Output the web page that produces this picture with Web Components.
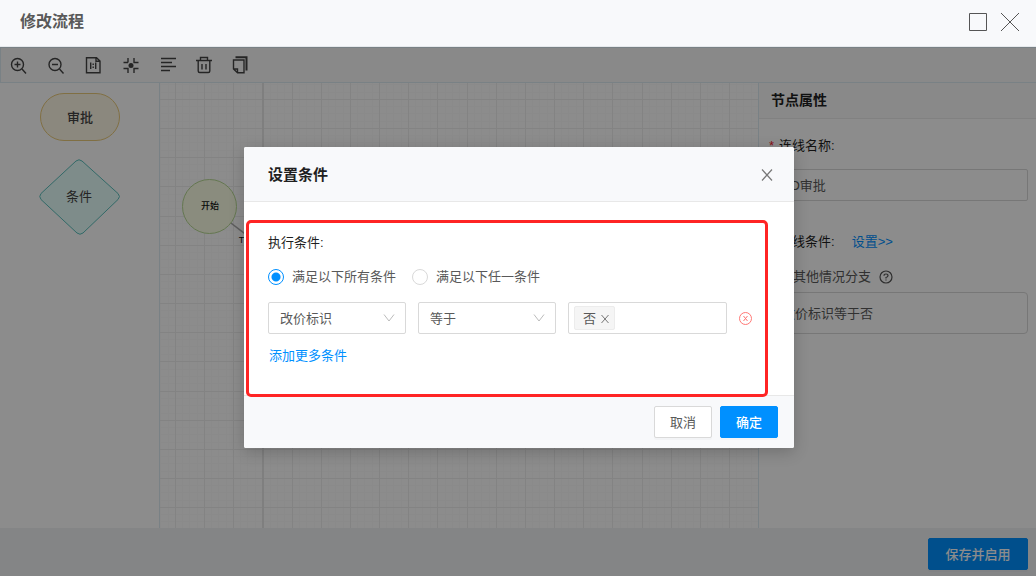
<!DOCTYPE html>
<html lang="zh-CN">
<head>
<meta charset="utf-8">
<title>修改流程</title>
<style>
  html {
    --blue: #0090ff;
    --bar: #f8f9fb;
    --line: #d9d9d9;
    --text: #595959;
    --strong: #1f1f1f;
  }
  body {
    margin: 0;
    font: 13px/20px "Liberation Sans", "Noto Sans CJK SC", sans-serif;
    color: var(--text);
  }
</style>
</head>
<body>
<flow-window>
  <span slot="title">修改流程</span>
  <flow-toolbar></flow-toolbar>
  <flow-editor>
    <node-palette slot="palette"></node-palette>
    <flow-canvas></flow-canvas>
    <node-props slot="props"></node-props>
  </flow-editor>
  <flow-footer><ui-button kind="primary" size="wide">保存并启用</ui-button></flow-footer>
  <modal-dialog slot="modal">
    <span slot="title">设置条件</span>
    <condition-form></condition-form>
    <ui-button slot="actions">取消</ui-button>
    <ui-button slot="actions" kind="primary">确定</ui-button>
  </modal-dialog>
</flow-window>

<script>
  // defines an element whose shadow root is cloned from the markup
  const define = (name, html) => {
    const temp = document.createElement('template');
    temp.innerHTML = html;
    customElements.define(name, class extends HTMLElement {
      constructor() {
        super();
        this.attachShadow({ mode: 'open' }).appendChild(temp.content.cloneNode(true));
      }
    });
  };

  define('flow-window', `
    <style>
      :host { display: flex; flex-direction: column; min-height: 100vh; }
      header {
        display: flex; align-items: center; gap: 14px; box-sizing: border-box; height: 47px;
        padding: 0 17px 2px 20px; background: var(--bar); border-bottom: 1px solid #e6e9ec;
      }
      h1 { flex: 1; margin: 0; font-size: 16px; line-height: 24px; font-weight: 700; color: #595959; }
      button { padding: 0; border: 0; background: none; height: 18px; }
      svg { display: block; fill: none; stroke: #555; }
      .stage { position: relative; flex: 1; display: flex; flex-direction: column; background: #fff; }
      .mask {
        position: absolute; inset: 0; display: flex; align-items: flex-start; justify-content: center;
        padding-top: 100px; background: rgba(0, 0, 0, .45);
      }
    </style>
    <header>
      <h1><slot name="title"></slot></h1>
      <button aria-label="最大化"><svg width="18" height="18"><path d="M.5.5h17v17H.5z"/></svg></button>
      <button aria-label="关闭"><svg width="18" height="18"><path d="M0 0l18 18M18 0L0 18"/></svg></button>
    </header>
    <div class="stage">
      <slot></slot>
      <div class="mask"><slot name="modal"></slot></div>
    </div>`);

  define('flow-toolbar', `
    <style>
      :host {
        display: flex; align-items: center; gap: 19px; box-sizing: border-box; height: 36px; padding: 0 9px;
        background: #fafafa; border: 1px solid #dcebf2; border-right: 0;
      }
      button { padding: 0; border: 0; background: none; height: 18px; }
      svg { display: block; fill: none; stroke: #444; stroke-width: 1.4; }
    </style>
    <button aria-label="放大"><svg width="18" height="18"><circle cx="7.500" cy="8.500" r="6"/><path d="M12 13l4 4.500M4.500 8.500h6M7.500 5.500v6"/></svg></button>
    <button aria-label="缩小"><svg width="18" height="18"><circle cx="8" cy="8.500" r="6"/><path d="M12.500 13l4 4.500M5 8.500h6"/></svg></button>
    <button aria-label="实际大小"><svg width="18" height="18"><path d="M2.500 1.700h10L16 5v11.800H2.500zM12 1.700V5.200H16M6.700 6.500v6.500M11.700 6.500v6.500M9.200 7.500v1.500M9.200 10.500v1.500"/></svg></button>
    <button aria-label="适应画布"><svg width="18" height="18"><circle cx="10" cy="9.500" r="2.500" fill="#444" stroke="none"/><path d="M2.500 6.500H7M7 6.500V2M13 2v4.500h4.500M2.500 12.500H7V17M13 17v-4.500h4.500"/></svg></button>
    <button aria-label="对齐"><svg width="18" height="18"><path d="M3 2.500h15M3 6.500h11M3 10.500h15M3 14.500h9"/></svg></button>
    <button aria-label="删除"><svg width="18" height="18"><path d="M1 4.500h16M5.500 4V1.500h7V4M3.200 4.500V15Q3.200 16.500 4.700 16.500H13.300Q14.800 16.500 14.800 15V4.500M7 8v5.500M11 8v5.500"/></svg></button>
    <button aria-label="复制"><svg width="18" height="18"><path d="M1.500 4h10.500v12.800H5.500L1.500 13zM1.500 13h4v3.800"/><path d="M3.500 1.200h11V14.500" stroke-width="2"/></svg></button>`);

  define('flow-editor', `
    <style>
      :host { flex: 1; display: grid; grid-template-columns: 160px 1fr 278px; }
    </style>
    <slot name="palette"></slot><slot></slot><slot name="props"></slot>`);

  define('node-palette', `
    <style>
      :host {
        display: flex; flex-direction: column; align-items: center; gap: 17px; padding-top: 10px;
        border-right: 1px solid #dcebf2;
      }
      svg { display: block; }
      text { font-size: 13px; text-anchor: middle; fill: #444; }
    </style>
    <svg width="80" height="48"><rect x=".5" y=".5" width="79" height="47" rx="23.500" fill="#fef7e6" stroke="#eacb7a"/><text x="40" y="29" font-weight="500" fill="#111">审批</text></svg>
    <svg width="84" height="78"><path d="M37 2Q40 -.500 43 2L79 34.500Q82 37.500 79 40.500L44 74Q41 76.500 38 74L2 40.500Q-.500 37.500 2 34.500Z" fill="#e6fffb" stroke="#5cc0bd" transform="translate(1 1)"/><text x="41" y="43">条件</text></svg>`);

  define('flow-canvas', `
    <style>
      :host { display: block; }
      svg { display: block; width: 100%; height: 100%; }
      text { font-size: 9px; font-weight: 500; fill: #111; text-anchor: middle; }
    </style>
    <svg>
      <defs>
        <pattern id="grid" x="15" y="16" width="175" height="175" patternUnits="userSpaceOnUse">
          <path d="M7.500 0v175M14.500 0v175M22.500 0v175M36.500 0v175M43.500 0v175M51.500 0v175M65.500 0v175M72.500 0v175M80.500 0v175M95.500 0v175M102.500 0v175M109.500 0v175M124.500 0v175M131.500 0v175M139.500 0v175M153.500 0v175M160.500 0v175M168.500 0v175M0 7.500h175M0 14.500h175M0 22.500h175M0 36.500h175M0 43.500h175M0 51.500h175M0 65.500h175M0 72.500h175M0 80.500h175M0 95.500h175M0 102.500h175M0 109.500h175M0 124.500h175M0 131.500h175M0 139.500h175M0 153.500h175M0 160.500h175M0 168.500h175" stroke="#fbfbfb"/>
          <path d="M.5 0v175M29.500 0v175M58.500 0v175M87.500 0v175M117.500 0v175M146.500 0v175M0 .5h175M0 29.500h175M0 58.500h175M0 87.500h175M0 117.500h175M0 146.500h175" stroke="#eee"/>
        </pattern>
      </defs>
      <rect width="100%" height="100%" fill="url(#grid)"/>
      <line x1="103" x2="103" y1="0" y2="100%" stroke="#e8e8e8" stroke-width="2"/>
      <path d="M50 124l60 46" stroke="#aaa" stroke-width="1.500"/>
      <circle cx="49.500" cy="123.500" r="27" fill="#fbffe6" stroke="#b7d993"/>
      <text x="50" y="126">开始</text>
      <text x="94" y="160">TO审批</text>
    </svg>`);

  define('node-props', `
    <style>
      :host { display: block; border-left: 1px solid #dcebf2; }
      h2 {
        margin: 0; padding: 7px 12px 8px; background: #fafafa; border-bottom: 1px solid #ececec;
        font-size: 14px; line-height: 20px; font-weight: 700; color: var(--strong);
      }
      .fields { display: flex; flex-direction: column; padding: 17px 8px 0 10px; }
      .name, .row b { font-weight: 400; color: var(--strong); }
      .name::before, .row b::before { content: "*"; margin-right: 5px; color: #f5222d; }
      input[type=text], textarea {
        box-sizing: border-box; width: 100%; margin: 13px 0 31px; padding: 0 12px 2px; height: 32px;
        border: 1px solid var(--line); border-radius: 2px; background: #fff; font: inherit; color: inherit;
      }
      textarea { display: block; height: 42px; margin: 5px 0 0; padding: 11px 12px 9px; border-radius: 4px; resize: none; }
      .row { display: flex; gap: 17px; }
      a { color: var(--blue); text-decoration: none; }
      .other { display: flex; align-items: center; gap: 8px; margin-top: 15px; }
      .other label { display: flex; align-items: center; gap: 8px; }
      .other input { width: 16px; height: 16px; margin: 0; }
      svg { fill: none; stroke: #555; stroke-width: 1.2; }
    </style>
    <h2>节点属性</h2>
    <div class="fields">
      <label class="name" for="name">连线名称:</label>
      <input id="name" type="text" value="TO审批">
      <div class="row"><b>连线条件:</b><a href="#">设置&gt;&gt;</a></div>
      <div class="other">
        <label><input type="checkbox">其他情况分支</label>
        <svg width="14" height="14"><circle cx="7" cy="7" r="6"/><path d="M5 5.800Q5 4 7 4T9 5.700Q9 6.800 7 7.500V8.500M7 9.500v1"/></svg>
      </div>
      <textarea aria-label="条件">改价标识等于否</textarea>
    </div>`);

  define('flow-footer', `
    <style>
      :host {
        display: flex; align-items: center; justify-content: flex-end; box-sizing: border-box;
        height: 48px; padding: 4px 8px 0; background: #f0f2f5;
      }
    </style>
    <slot></slot>`);

  define('ui-button', `
    <style>
      :host { display: block; }
      button {
        box-sizing: border-box; min-width: 58px; height: 32px; padding: 1px 15px 0;
        border: 1px solid var(--line); border-radius: 2px; background: #fff;
        font: inherit; color: var(--text); box-shadow: 0 2px 0 rgba(0, 0, 0, .02);
      }
      :host([kind=primary]) button { background: var(--blue); border-color: var(--blue); color: #fff; font-weight: 500; }
      :host([size=wide]) button { min-width: 100px; }
    </style>
    <button><slot></slot></button>`);

  define('modal-dialog', `
    <style>
      :host {
        display: block; width: 550px; margin-left: 2px; background: #fff; border-radius: 2px;
        box-shadow: 0 4px 16px rgba(0, 0, 0, .2);
      }
      header {
        display: flex; align-items: center; box-sizing: border-box; height: 55px; padding: 1px 21px 0 24px;
        background: var(--bar); border-bottom: 1px solid #e8e8e8; border-radius: 2px 2px 0 0;
      }
      h2 { flex: 1; margin: 0; font-size: 15px; line-height: 24px; font-weight: 700; color: var(--strong); }
      header button { padding: 0; border: 0; background: none; height: 12px; }
      svg { display: block; fill: none; stroke: #777; stroke-width: 1.2; }
      footer {
        display: flex; justify-content: flex-end; gap: 8px; padding: 10px 16px;
        background: var(--bar); border-top: 1px solid #e8e8e8; border-radius: 0 0 2px 2px;
      }
    </style>
    <header>
      <h2><slot name="title"></slot></h2>
      <button aria-label="关闭"><svg width="12" height="12"><path d="M1 .5l10 11M11 .5l-10 11"/></svg></button>
    </header>
    <slot></slot>
    <footer><slot name="actions"></slot></footer>`);

  define('condition-form', `
    <style>
      :host { display: block; position: relative; padding: 31px 24px 29px; }
      fieldset { margin: 0; padding: 0; border: 0; }
      legend { padding: 0; color: var(--strong); }
      .radios { display: flex; gap: 16px; margin-top: 14px; }
      label { display: flex; align-items: center; gap: 8px; }
      input[type=radio] {
        appearance: none; width: 16px; height: 16px; margin: 0; border: 1px solid var(--line); border-radius: 50%;
      }
      input[type=radio]:checked { border-color: var(--blue); background: radial-gradient(var(--blue) 4px, #fff 5px); }
      .row { display: flex; align-items: center; gap: 12px; margin: 15px 0 12px; }
      .select { display: grid; width: 138px; align-items: center; }
      .select > * { grid-area: 1 / 1; }
      select, .tags {
        box-sizing: border-box; height: 32px; border: 1px solid var(--line); border-radius: 2px;
        background: #fff; font: inherit; color: inherit;
      }
      select { appearance: none; width: 100%; padding: 1px 11px 0; }
      svg { display: block; fill: none; stroke: #bbb; pointer-events: none; }
      .select svg { justify-self: end; margin-right: 11px; }
      .tags { display: flex; align-items: center; width: 159px; padding: 0 5px; }
      .tag {
        display: flex; flex: none; align-items: center; gap: 5px; box-sizing: border-box; height: 24px; padding: 1px 5px 0 8px;
        background: #f5f5f5; border: 1px solid #ececec; border-radius: 2px;
      }
      .tags input { min-width: 0; width: 100%; border: 0; outline: 0; background: none; }
      button { padding: 0; border: 0; background: none; }
      .tag svg { stroke: #777; }
      .remove svg { stroke: #ff7875; }
      a { margin-left: 1px; color: var(--blue); text-decoration: none; }
      .marker {
        position: absolute; inset: 18px 26px -2px 2px; border: 3px solid #ff2424; border-radius: 5px; pointer-events: none;
      }
    </style>
    <fieldset>
      <legend>执行条件:</legend>
      <div class="radios">
        <label><input type="radio" name="match" checked>满足以下所有条件</label>
        <label><input type="radio" name="match">满足以下任一条件</label>
      </div>
    </fieldset>
    <div class="row">
      <div class="select">
        <select aria-label="字段"><option>改价标识</option></select>
        <svg width="12" height="8"><path d="M1 .5l5 6.500 5-6.500"/></svg>
      </div>
      <div class="select">
        <select aria-label="运算符"><option>等于</option></select>
        <svg width="12" height="8"><path d="M1 .5l5 6.500 5-6.500"/></svg>
      </div>
      <div class="tags">
        <span class="tag">否<button aria-label="移除"><svg width="8" height="8"><path d="M.5 0l7 8M7.500 0l-7 8"/></svg></button></span>
        <input type="text" aria-label="值">
      </div>
      <button class="remove" aria-label="删除条件"><svg width="13" height="13"><circle cx="6.500" cy="6.500" r="6"/><path d="M4.500 4l4 5M8.500 4l-4 5"/></svg></button>
    </div>
    <a href="#">添加更多条件</a>
    <div class="marker"></div>`);
</script>
</body>
</html>
